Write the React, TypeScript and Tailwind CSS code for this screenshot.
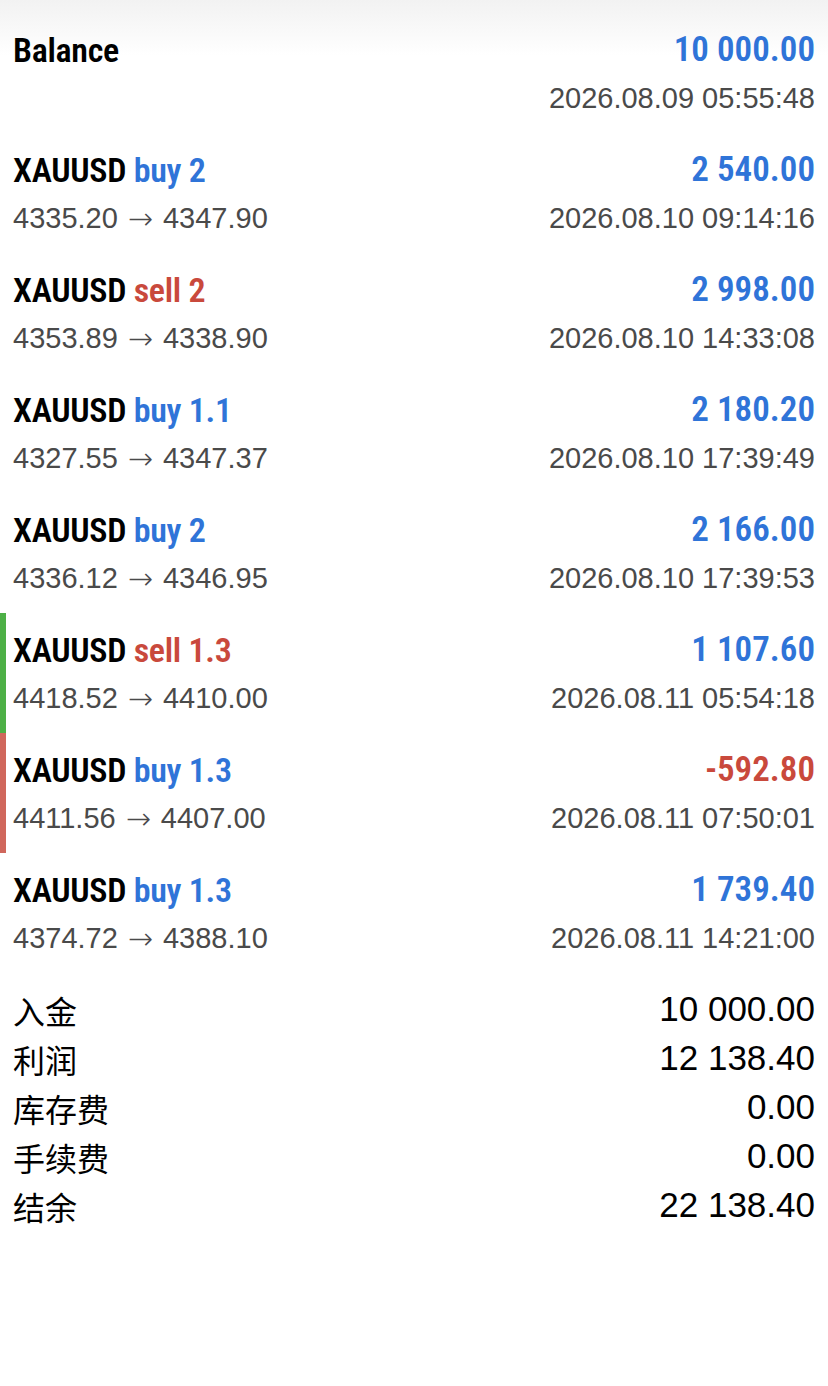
import React from 'react';

type Deal = {
  side: 'buy' | 'sell';
  volume: string;
  open: string;
  close: string;
  profit: string;
  time: string;
  mark?: 'green' | 'red';
};

const deals: Deal[] = [
  { side: 'buy', volume: '2', open: '4335.20', close: '4347.90', profit: '2 540.00', time: '2026.08.10 09:14:16' },
  { side: 'sell', volume: '2', open: '4353.89', close: '4338.90', profit: '2 998.00', time: '2026.08.10 14:33:08' },
  { side: 'buy', volume: '1.1', open: '4327.55', close: '4347.37', profit: '2 180.20', time: '2026.08.10 17:39:49' },
  { side: 'buy', volume: '2', open: '4336.12', close: '4346.95', profit: '2 166.00', time: '2026.08.10 17:39:53' },
  { side: 'sell', volume: '1.3', open: '4418.52', close: '4410.00', profit: '1 107.60', time: '2026.08.11 05:54:18', mark: 'green' },
  { side: 'buy', volume: '1.3', open: '4411.56', close: '4407.00', profit: '-592.80', time: '2026.08.11 07:50:01', mark: 'red' },
  { side: 'buy', volume: '1.3', open: '4374.72', close: '4388.10', profit: '1 739.40', time: '2026.08.11 14:21:00' },
];

const summary = [
  { label: '入金', value: '10 000.00' },
  { label: '利润', value: '12 138.40' },
  { label: '库存费', value: '0.00' },
  { label: '手续费', value: '0.00' },
  { label: '结余', value: '22 138.40' },
];

const titleFont = "font-['Roboto_Condensed','Open_Sans',sans-serif] font-stretch-[75%] font-semibold";
const bodyFont = "font-['Liberation_Sans',Arial,sans-serif]";

const App: React.FC = () => {
  return (
    <div className="min-h-[1386px] w-full bg-gradient-to-b from-[#f2f2f2] via-white via-[4%] to-white">
      {/* balance line */}
      <div className="pt-[26px] pb-[9px] pl-[13px] pr-[13px]">
        <div className="flex h-[48px] items-center justify-between">
          <span className={`${titleFont} text-[34px] tracking-[-0.3px] text-black`}>Balance</span>
          <span className={`${titleFont} text-[35px] text-[#2f74d8]`}>10 000.00</span>
        </div>
        <div className={`flex h-[50px] items-center justify-end ${bodyFont} text-[29px] text-[#4a4a4a]`}>
          2026.08.09 05:55:48
        </div>
      </div>

      {deals.map((deal, i) => {
        const border = deal.mark === 'green'
          ? 'border-[#4db046]'
          : deal.mark === 'red'
            ? 'border-[#d0675c]'
            : 'border-transparent';
        const sideColor = deal.side === 'buy' ? 'text-[#2f74d8]' : 'text-[#c9493c]';
        const profitColor = deal.profit.startsWith('-') ? 'text-[#c9493c]' : 'text-[#2f74d8]';
        return (
          <div key={i} className={`border-l-[6px] ${border} pt-[13px] pb-[9px] pl-[7px] pr-[13px]`}>
            <div className="flex h-[48px] items-center justify-between">
              <span className={`${titleFont} text-[34px] tracking-[-0.3px] text-black`}>
                XAUUSD <span className={sideColor}>{deal.side} {deal.volume}</span>
              </span>
              <span className={`${titleFont} text-[35px] ${profitColor}`}>{deal.profit}</span>
            </div>
            <div className={`flex h-[50px] items-center justify-between ${bodyFont} text-[29px] text-[#4a4a4a]`}>
              <span className="flex items-center">
                {deal.open}
                <span className="mx-[10px] font-['DejaVu_Sans',sans-serif] font-extralight text-[30px] leading-none">→</span>
                {deal.close}
              </span>
              <span>{deal.time}</span>
            </div>
          </div>
        );
      })}

      <div className="pt-[12px] pl-[13px] pr-[13px]">
        {summary.map(row => (
          <div key={row.label} className="flex h-[49px] items-center justify-between text-black">
            <span className="font-['Noto_Sans_CJK_SC',sans-serif] text-[32px] leading-none">{row.label}</span>
            <span className={`${bodyFont} text-[35px]`}>{row.value}</span>
          </div>
        ))}
      </div>
    </div>
  );
};

export default App;
